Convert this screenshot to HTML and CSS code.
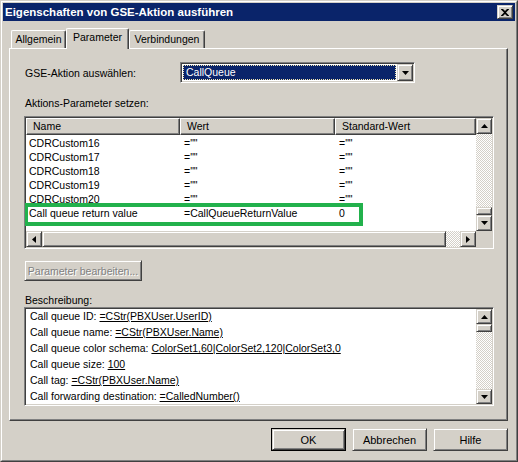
FILE: index.html
```html
<!DOCTYPE html>
<html>
<head>
<meta charset="utf-8">
<link rel="stylesheet" href="styles.css">
</head>
<body>
<div class="window">
  <div class="frame">
    <div class="titlebar">
      <span class="title">Eigenschaften von GSE-Aktion ausführen</span>
      <span class="close raised"><svg width="8" height="7" viewBox="0 0 8 7"><path d="M0 0h2l2 2 2-2h2v0.5L5 3.5l3 3V7H6L4 5 2 7H0v-0.5l3-3L0 0.5z" fill="#000"/></svg></span>
    </div>
    <div class="content">
      <div class="tabs">
        <div class="tab t-allg">Allgemein</div>
        <div class="tab active t-param">Parameter</div>
        <div class="tab t-verb">Verbindungen</div>
      </div>
      <div class="panel">
        <div class="sel-row">
          <span class="sel-label">GSE-Aktion auswählen:</span>
          <div class="combo sunken">
            <div class="combo-value"><span class="combo-sel">CallQueue</span></div>
            <div class="combo-btn raised"><svg width="7" height="4" viewBox="0 0 7 4"><polygon points="0,0 7,0 3.5,4" fill="#000"/></svg></div>
          </div>
        </div>
        <div class="label lbl-params">Aktions-Parameter setzen:</div>
        <div class="listview sunken">
          <div class="lv-main">
            <div class="lv-data">
              <div class="lv-header">
                <div class="lv-hcell c1">Name</div>
                <div class="lv-hcell c2">Wert</div>
                <div class="lv-hcell c3">Standard-Wert</div>
              </div>
              <div class="lv-rows">
                <div class="lv-row"><span class="c1">CDRCustom16</span><span class="c2">=""</span><span class="c3">=""</span></div>
                <div class="lv-row"><span class="c1">CDRCustom17</span><span class="c2">=""</span><span class="c3">=""</span></div>
                <div class="lv-row"><span class="c1">CDRCustom18</span><span class="c2">=""</span><span class="c3">=""</span></div>
                <div class="lv-row"><span class="c1">CDRCustom19</span><span class="c2">=""</span><span class="c3">=""</span></div>
                <div class="lv-row"><span class="c1">CDRCustom20</span><span class="c2">=""</span><span class="c3">=""</span></div>
                <div class="lv-row"><span class="c1">Call queue return value</span><span class="c2">=CallQueueReturnValue</span><span class="c3">0</span></div>
              </div>
            </div>
            <div class="vscroll">
              <div class="sb-btn raised"><svg width="7" height="4" viewBox="0 0 7 4"><polygon points="3.5,0 7,4 0,4" fill="#000"/></svg></div>
              <div class="sb-track"></div>
              <div class="sb-thumb-v raised"></div>
              <div class="sb-btn raised"><svg width="7" height="4" viewBox="0 0 7 4"><polygon points="0,0 7,0 3.5,4" fill="#000"/></svg></div>
            </div>
          </div>
          <div class="hscroll-row">
            <div class="sb-btn raised"><svg width="4" height="7" viewBox="0 0 4 7"><polygon points="0,3.5 4,0 4,7" fill="#000"/></svg></div>
            <div class="sb-thumb-h raised"></div>
            <div class="sb-track"></div>
            <div class="sb-btn raised"><svg width="4" height="7" viewBox="0 0 4 7"><polygon points="0,0 4,3.5 0,7" fill="#000"/></svg></div>
            <div class="sb-corner"></div>
          </div>
          <div class="highlight"></div>
        </div>
        <div class="btn raised disabled edit-btn">Parameter bearbeiten...</div>
        <div class="label lbl-desc">Beschreibung:</div>
        <div class="desc sunken">
          <div class="desc-text">
            <div class="desc-line">Call queue ID: <u>=CStr(PBXUser.UserID)</u></div>
            <div class="desc-line">Call queue name: <u>=CStr(PBXUser.Name)</u></div>
            <div class="desc-line">Call queue color schema: <u>ColorSet1,60|ColorSet2,120|ColorSet3,0</u></div>
            <div class="desc-line">Call queue size: <u>100</u></div>
            <div class="desc-line">Call tag: <u>=CStr(PBXUser.Name)</u></div>
            <div class="desc-line">Call forwarding destination: <u>=CalledNumber()</u></div>
          </div>
          <div class="vscroll desc-scroll">
            <div class="sb-btn raised"><svg width="7" height="4" viewBox="0 0 7 4"><polygon points="3.5,0 7,4 0,4" fill="#000"/></svg></div>
            <div class="sb-thumb-v raised"></div>
            <div class="sb-track"></div>
            <div class="sb-btn raised"><svg width="7" height="4" viewBox="0 0 7 4"><polygon points="0,0 7,0 3.5,4" fill="#000"/></svg></div>
          </div>
        </div>
      </div>
      <div class="buttons">
        <div class="btn default"><div class="btn-inner raised">OK</div></div>
        <div class="btn raised">Abbrechen</div>
        <div class="btn raised">Hilfe</div>
      </div>
    </div>
  </div>
</div>
</body>
</html>
```
FILE: styles.css
```css
html, body {
  margin: 0;
  padding: 0;
}
body {
  background: #d4d0c8;
  font: 10.5px "Liberation Sans", Arial, sans-serif;
  color: #000;
}
.window {
  width: 518px;
  height: 462px;
  box-sizing: border-box;
  border: 1px solid;
  border-color: #d4d0c8 #404040 #404040 #d4d0c8;
  background: #d4d0c8;
}
.frame {
  height: 100%;
  box-sizing: border-box;
  border: 1px solid;
  border-color: #fff #808080 #808080 #fff;
  padding: 1px;
  display: flex;
  flex-direction: column;
}
.raised {
  background: #d4d0c8;
  box-sizing: border-box;
  border: 1px solid;
  border-color: #d4d0c8 #404040 #404040 #d4d0c8;
  box-shadow: inset 1px 1px #fff, inset -1px -1px #808080;
}
.sunken {
  box-sizing: border-box;
  border: 1px solid;
  border-color: #808080 #fff #fff #808080;
  box-shadow: inset 1px 1px #404040, inset -1px -1px #d4d0c8;
  background: #fff;
}
.titlebar {
  height: 18px;
  flex: none;
  background: #0a246a;
  display: flex;
  align-items: center;
  justify-content: space-between;
  padding: 0 2px;
}
.title {
  color: #fff;
  font-weight: bold;
  font-size: 11.5px;
  white-space: nowrap;
}
.close {
  width: 16px;
  height: 14px;
  display: flex;
  align-items: center;
  justify-content: center;
}
.content {
  flex: 1;
  display: flex;
  flex-direction: column;
  padding: 7px 7px 0 6px;
}
.tabs {
  display: flex;
  align-items: flex-end;
  height: 21px;
  padding-left: 2px;
  margin-bottom: -1px;
}
.tab {
  height: 18px;
  box-sizing: border-box;
  margin-bottom: 1px;
  border: 1px solid;
  border-bottom: none;
  border-color: #fff #404040 #404040 #fff;
  border-radius: 2px 2px 0 0;
  box-shadow: inset -1px 0 #808080;
  line-height: 17px;
  text-align: center;
  white-space: nowrap;
}
.t-allg { width: 55px; }
.t-param { width: 63px; }
.t-verb { width: 76px; }
.tab.active {
  height: 21px;
  margin-bottom: 0;
  position: relative;
  z-index: 1;
  background: #d4d0c8;
  line-height: 17px;
}
.panel {
  flex: none;
  height: 373px;
  box-sizing: border-box;
  border: 1px solid;
  border-color: #fff #404040 #404040 #fff;
  box-shadow: inset -1px -1px #808080;
  padding: 13px 14px 0 14px;
  display: flex;
  flex-direction: column;
}
.sel-row {
  display: flex;
  align-items: center;
  height: 21px;
}
.sel-label {
  width: 155px;
  margin-left: 1px;
  white-space: nowrap;
}
.combo {
  width: 235px;
  height: 21px;
  display: flex;
  padding: 1px;
  gap: 1px;
}
.combo-value {
  flex: 1;
  padding: 1px 0 1px 1px;
  display: flex;
}
.combo-sel {
  flex: 1;
  background: #0a246a;
  color: #fff;
  border: 1px dotted #f4e8b0;
  line-height: 13px;
  padding-left: 2px;
}
.combo-btn {
  width: 16px;
  display: flex;
  align-items: center;
  justify-content: center;
}
.label {
  line-height: 13px;
  margin-left: 1px;
  white-space: nowrap;
}
.lbl-params {
  margin-top: 14px;
}
.listview {
  margin-top: 6px;
  width: 470px;
  height: 133px;
  padding: 1px;
  position: relative;
  display: flex;
  flex-direction: column;
  overflow: hidden;
}
.lv-main {
  flex: 1;
  display: flex;
  min-height: 0;
}
.lv-data {
  flex: 1;
  display: flex;
  flex-direction: column;
  overflow: hidden;
}
.lv-header {
  display: flex;
  height: 17px;
  flex: none;
}
.lv-hcell {
  box-sizing: border-box;
  background: #d4d0c8;
  border: 1px solid;
  border-color: #fff #404040 #404040 #fff;
  box-shadow: inset -1px -1px #808080;
  padding-left: 6px;
  line-height: 15px;
  white-space: nowrap;
}
.c1 { width: 154px; flex: none; }
.c2 { width: 155px; flex: none; }
.c3 { flex: 1; }
.lv-rows {
  flex: 1;
  padding-top: 1px;
  background: #fff;
}
.lv-row {
  display: flex;
  height: 14px;
  line-height: 14px;
  white-space: nowrap;
}
.lv-row span {
  box-sizing: border-box;
  padding-left: 3px;
}
.lv-row .c2 { padding-left: 4px; }
.lv-row .c3 { padding-left: 4px; }
.vscroll {
  width: 16px;
  flex: none;
  display: flex;
  flex-direction: column;
}
.sb-btn {
  width: 16px;
  height: 16px;
  flex: none;
  display: flex;
  align-items: center;
  justify-content: center;
}
.sb-track {
  flex: 1;
  background: repeating-conic-gradient(#fff 0 25%, #d4d0c8 0 50%) 0 0 / 2px 2px;
}
.sb-thumb-v {
  height: 8px;
  flex: none;
}
.hscroll-row {
  display: flex;
  height: 16px;
  flex: none;
}
.sb-thumb-h {
  width: 404px;
  flex: none;
}
.sb-corner {
  width: 16px;
  flex: none;
  background: #d4d0c8;
}
.highlight {
  position: absolute;
  left: 0px;
  top: 86px;
  width: 338px;
  height: 23px;
  box-sizing: border-box;
  border: 4px solid #22b14c;
  border-left-width: 3px;
}
.btn {
  width: 75px;
  height: 23px;
  display: flex;
  align-items: center;
  justify-content: center;
  white-space: nowrap;
  box-sizing: border-box;
  font-size: 11px;
}
.edit-btn {
  margin-top: 11px;
  width: 118px;
  height: 21px;
  font-size: 10.5px;
}
.disabled {
  color: #808080;
  text-shadow: 1px 1px #fff;
}
.lbl-desc {
  margin-top: 13px;
}
.desc {
  width: 470px;
  height: 99px;
  padding: 1px;
  display: flex;
}
.desc-text {
  flex: 1;
  padding-left: 4px;
  margin-top: -1px;
}
.desc-line {
  height: 16px;
  line-height: 16px;
  white-space: nowrap;
}
.desc-scroll .sb-btn {
  height: 15px;
}
.buttons {
  display: flex;
  justify-content: flex-end;
  gap: 6px;
  margin-top: 7px;
}
.btn.default {
  border: 1px solid #000;
  padding: 0;
}
.btn-inner {
  width: 100%;
  height: 100%;
  display: flex;
  align-items: center;
  justify-content: center;
}
```
